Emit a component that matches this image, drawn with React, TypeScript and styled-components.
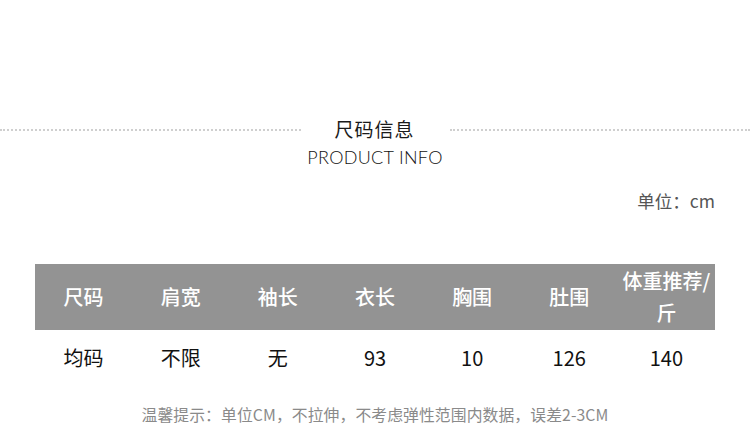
import React from "react";
import styled, {createGlobalStyle} from "styled-components";

const GlobalStyle = createGlobalStyle`
  html, body {
    margin: 0;
    padding: 0;
    background: #ffffff;
  }
  body {
    font-family: "Noto Sans CJK SC", "Noto Sans", sans-serif;
  }
`;

const Page = styled.div`
  width: 750px;
  height: 429px;
  background: #fff;
  padding-top: 116px;
  box-sizing: border-box;
  overflow: hidden;
`;

const TitleRow = styled.div`
  display: flex;
  align-items: center;
  height: 26px;
`;

const DotLine = styled.div`
  flex: 1;
  border-top: 2px dotted #cfcfcf;
  margin-top: 1px;
`;

const Title = styled.div`
  padding: 0 35px 0 34px;
  font-size: 19px;
  line-height: 26px;
  color: #1a1a1a;
  letter-spacing: 1px;
`;

const SubTitle = styled.div`
  text-align: center;
  font-family: Lato, "Liberation Sans", sans-serif;
  font-weight: 300;
  font-size: 18px;
  line-height: 24px;
  color: #111;
  margin-top: 3px;
  letter-spacing: 0.3px;
`;

const Unit = styled.div`
  text-align: right;
  padding-right: 35px;
  font-size: 17.5px;
  line-height: 24px;
  color: #555;
  margin-top: 20px;
`;

const Table = styled.div`
  margin: 51px 35px 0;
`;

const Row = styled.div<{ $head?: boolean }>`
  display: grid;
  grid-template-columns: repeat(7, 1fr);
  align-items: center;
  height: ${p => (p.$head ? "66px" : "56px")};
  background: ${p => (p.$head ? "#939393" : "transparent")};
  color: ${p => (p.$head ? "#ffffff" : "#111")};
`;

const Cell = styled.div<{ $head?: boolean }>`
  text-align: center;
  font-size: 20px;
  line-height: 32px;
  font-weight: ${p => (p.$head ? 500 : 400)};
`;

const Note = styled.div`
  text-align: center;
  font-size: 15.8px;
  line-height: 20px;
  color: #8a8a8a;
  margin-top: 19px;
  letter-spacing: 0.1px;
`;

const heads = ["尺码", "肩宽", "袖长", "衣长", "胸围", "肚围", "体重推荐/斤"];
const values = ["均码", "不限", "无", "93", "10", "126", "140"];

export default function App() {
    return (
        <Page>
            <GlobalStyle/>
            <TitleRow>
                <DotLine/>
                <Title>尺码信息</Title>
                <DotLine/>
            </TitleRow>
            <SubTitle>PRODUCT INFO</SubTitle>
            <Unit>单位：cm</Unit>
            <Table>
                <Row $head>
                    {heads.map(h => (
                        <Cell $head key={h}>
                            {h === "体重推荐/斤" ? <>体重推荐/<br/>斤</> : h}
                        </Cell>
                    ))}
                </Row>
                <Row>
                    {values.map((v, i) => (
                        <Cell key={i}>{v}</Cell>
                    ))}
                </Row>
            </Table>
            <Note>温馨提示：单位CM，不拉伸，不考虑弹性范围内数据，误差2-3CM</Note>
        </Page>
    );
}
